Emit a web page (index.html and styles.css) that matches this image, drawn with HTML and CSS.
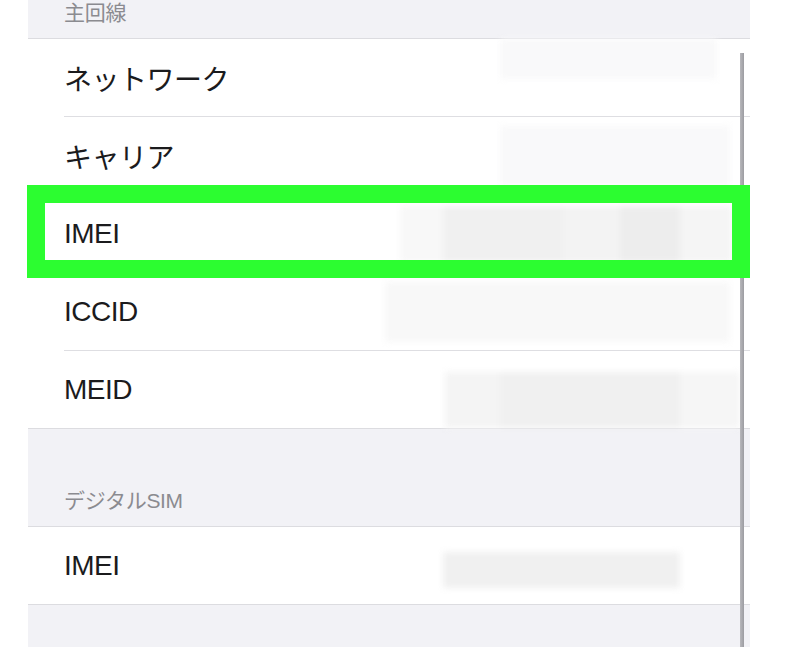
FILE: index.html
```html
<!DOCTYPE html>
<html lang="ja">
<head>
<meta charset="utf-8">
<link rel="stylesheet" href="styles.css">
</head>
<body>
<div class="panel">
  <div class="header">主回線</div>
  <div class="group">
    <div class="row">
      <span class="label">ネットワーク</span>
      <div class="vals vals-top"><span class="blk w217 c8"></span></div>
    </div>
    <div class="row">
      <span class="label">キャリア</span>
      <div class="vals vals-mid"><span class="blk w230 c8"></span></div>
    </div>
    <div class="row row-marked">
      <span class="label">IMEI</span>
      <div class="vals vals-imei">
        <span class="blk w43 c7"></span>
        <span class="blk w120 ce"></span>
        <span class="blk w57 c3"></span>
        <span class="blk w60 cc"></span>
        <span class="blk w52 c5"></span>
      </div>
      <div class="marker"></div>
    </div>
    <div class="row">
      <span class="label">ICCID</span>
      <div class="vals vals-mid"><span class="blk w345 c7"></span></div>
    </div>
    <div class="row">
      <span class="label">MEID</span>
      <div class="vals vals-bottom">
        <span class="blk w55 c4"></span>
        <span class="blk w180 ce"></span>
        <span class="blk w60 c6"></span>
      </div>
    </div>
  </div>
  <div class="header">デジタルSIM</div>
  <div class="group">
    <div class="row">
      <span class="label">IMEI</span>
      <div class="vals vals-sim"><span class="blk w237 cf"></span></div>
    </div>
  </div>
  <div class="scrollbar"></div>
</div>
</body>
</html>
```
FILE: styles.css
```css
html, body {
  margin: 0;
  padding: 0;
  background: #ffffff;
  overflow: hidden;
  height: 647px;
}

.panel {
  position: relative;
  margin: -59px 0 0 28px;
  width: 722px;
  min-height: 720px;
  background: #f2f2f6;
  font-family: "Liberation Sans", "Noto Sans CJK JP", sans-serif;
}

.header {
  height: 97px;
  box-sizing: border-box;
  padding: 0 0 12px 36px;
  display: flex;
  align-items: flex-end;
  font-size: 21px;
  line-height: 26px;
  color: #8b8b90;
  letter-spacing: -0.3px;
}

.group {
  background: #ffffff;
  border-top: 1px solid #dcdce0;
  border-bottom: 1px solid #dcdce0;
}

.row {
  position: relative;
  height: 77px;
  margin-left: 36px;
  display: flex;
  align-items: center;
  border-bottom: 1px solid #dedee2;
}

.row:last-child {
  border-bottom: none;
  height: 77px;
}

.label {
  font-size: 28px;
  letter-spacing: -0.5px;
  color: #1b1b1d;
}

.vals {
  margin-left: auto;
  display: flex;
  filter: blur(3px);
}

.vals-top {
  align-self: flex-start;
  margin-right: 33px;
  height: 40px;
}

.vals-mid {
  margin-right: 20px;
  height: 60px;
}

.vals-imei {
  margin-right: 18px;
  height: 56px;
}

.vals-bottom {
  align-self: flex-end;
  margin-right: 10px;
  height: 56px;
}

.vals-sim {
  margin-right: 70px;
  height: 36px;
  margin-top: 8px;
}

.blk { display: block; height: 100%; }
.w43 { width: 43px; }
.w52 { width: 52px; }
.w55 { width: 55px; }
.w57 { width: 57px; }
.w60 { width: 60px; }
.w120 { width: 120px; }
.w180 { width: 180px; }
.w217 { width: 217px; }
.w230 { width: 230px; }
.w237 { width: 237px; }
.w345 { width: 345px; }

.c3 { background: #f3f3f3; }
.c4 { background: #f4f4f4; }
.c5 { background: #f5f5f5; }
.c6 { background: #f6f6f6; }
.c7 { background: #f8f8f8; }
.c8 { background: #f9f9fa; }
.cc { background: #ededed; }
.ce { background: #f0f0f0; }
.cf { background: #f0f0f0; }

.marker {
  position: absolute;
  top: -10px;
  left: -37px;
  right: 0;
  bottom: -6px;
  border: 18px solid #2cfd30;
  z-index: 2;
}

.scrollbar {
  position: absolute;
  left: 712px;
  top: 112px;
  bottom: 0;
  width: 4px;
  background: linear-gradient(to right, #b8b8bc, #9c9ca1);
  z-index: 1;
}
```
